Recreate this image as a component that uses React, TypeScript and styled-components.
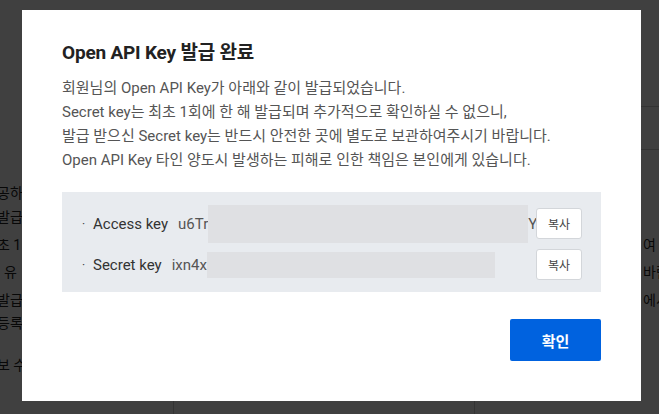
import React from "react";
import styled, { createGlobalStyle } from "styled-components";

const GlobalStyle = createGlobalStyle`
  html, body { margin: 0; padding: 0; }
  body {
    width: 659px;
    height: 414px;
    overflow: hidden;
    background: #ffffff;
    font-family: Roboto, "Noto Sans CJK KR", sans-serif;
  }
`;

const Page = styled.div`
  position: relative;
  width: 659px;
  height: 414px;
  overflow: hidden;
  background: #ffffff;
`;

const BackContent = styled.div`
  display: flex;
  flex-direction: column;
  padding-top: 106px;
  color: #222;
  font-size: 14px;
`;

const Rule = styled.div<{ $mb: number }>`
  height: 1px;
  background: #cfcfcf;
  margin-left: 640px;
  margin-bottom: ${(p) => p.$mb}px;
`;

const BackLine = styled.div<{ $h: number }>`
  display: grid;
  grid-template-columns: 646px 60px;
  height: ${(p) => p.$h}px;
  line-height: 20px;
  white-space: nowrap;
  margin-left: -3px;
`;

const BackBox = styled.div`
  margin: 4px 0 0 173px;
  width: 300px;
  height: 40px;
  border: 1px solid #d0d0d0;
  border-radius: 4px;
`;

const Overlay = styled.div`
  position: absolute;
  inset: 0;
  background: rgba(0, 0, 0, 0.75);
`;

const Modal = styled.div`
  position: absolute;
  left: 22px;
  top: 10px;
  width: 619px;
  height: 391px;
  box-sizing: border-box;
  background: #ffffff;
  padding: 30px 40px 40px;
  display: flex;
  flex-direction: column;
`;

const Title = styled.h2`
  margin: 0;
  font-size: 19px;
  line-height: 26px;
  font-weight: 700;
  color: #222222;
  letter-spacing: -0.2px;
`;

const Desc = styled.p`
  margin: 10px 0 0;
  font-size: 15px;
  line-height: 24px;
  color: #555555;
`;

const KeyBox = styled.div`
  margin-top: 20px;
  height: 100px;
  box-sizing: border-box;
  background: #e8ebef;
  padding: 16px 19px 12px 20px;
  display: flex;
  flex-direction: column;
  gap: 10px;
`;

const KeyRow = styled.div`
  display: flex;
  align-items: center;
  height: 31px;
  font-size: 15px;
  color: #333333;
  white-space: nowrap;
`;

const Bullet = styled.span`
  flex: none;
  width: 11px;
  font-size: 12px;
  color: #444;
`;

const KeyLabel = styled.span`
  flex: none;
  margin-right: 10px;
`;

const KeyValue = styled.span`
  flex: 1;
  min-width: 0;
  display: flex;
  align-items: center;
  color: #555555;
`;

const Blur = styled.span<{ $w: number; $h: number }>`
  flex: none;
  display: inline-block;
  width: ${(p) => p.$w}px;
  height: ${(p) => p.$h}px;
  background: #dfe0e3;
`;

const CopyButton = styled.button`
  flex: none;
  width: 46px;
  height: 31px;
  box-sizing: border-box;
  border: 1px solid #d3d6da;
  border-radius: 3px;
  background: #ffffff;
  font-family: Roboto, "Noto Sans CJK KR", sans-serif;
  font-size: 12px;
  color: #444;
  padding: 0;
  cursor: pointer;
`;

const Footer = styled.div`
  margin-top: 27px;
  display: flex;
  justify-content: flex-end;
`;

const ConfirmButton = styled.button`
  width: 91px;
  height: 42px;
  border: none;
  border-radius: 2px;
  background: #0062df;
  color: #ffffff;
  font-family: Roboto, "Noto Sans CJK KR", sans-serif;
  font-size: 15px;
  font-weight: 700;
  cursor: pointer;
`;

const backLines: { l: string; r: string; h: number }[] = [
  { l: "공하", r: "", h: 24 },
  { l: "발급", r: "", h: 28 },
  { l: "초 1", r: "여 ㅊ", h: 27 },
  { l: "l 유", r: "바란", h: 28 },
  { l: "발급", r: "에서", h: 23 },
  { l: "등록", r: "", h: 42 },
  { l: "보 수", r: "", h: 24 },
];

export default function App() {
  return (
    <>
      <GlobalStyle />
      <Page>
        <BackContent>
          <Rule $mb={42} />
          <Rule $mb={33} />
          {backLines.map((b, i) => (
            <BackLine key={i} $h={b.h}>
              <span>{b.l}</span>
              <span>{b.r}</span>
            </BackLine>
          ))}
          <BackBox />
        </BackContent>
        <Overlay />
        <Modal>
          <Title>Open API Key 발급 완료</Title>
          <Desc>
            회원님의 Open API Key가 아래와 같이 발급되었습니다.
            <br />
            Secret key는 최초 1회에 한 해 발급되며 추가적으로 확인하실 수 없으니,
            <br />
            발급 받으신 Secret key는 반드시 안전한 곳에 별도로 보관하여주시기 바랍니다.
            <br />
            Open API Key 타인 양도시 발생하는 피해로 인한 책임은 본인에게 있습니다.
          </Desc>
          <KeyBox>
            <KeyRow>
              <Bullet>·</Bullet>
              <KeyLabel>Access key</KeyLabel>
              <KeyValue>
                u6Tr
                <Blur $w={320} $h={38} />
                Y
              </KeyValue>
              <CopyButton>복사</CopyButton>
            </KeyRow>
            <KeyRow>
              <Bullet>·</Bullet>
              <KeyLabel>Secret key</KeyLabel>
              <KeyValue>
                ixn4x
                <Blur $w={288} $h={26} />
              </KeyValue>
              <CopyButton>복사</CopyButton>
            </KeyRow>
          </KeyBox>
          <Footer>
            <ConfirmButton>확인</ConfirmButton>
          </Footer>
        </Modal>
      </Page>
    </>
  );
}
